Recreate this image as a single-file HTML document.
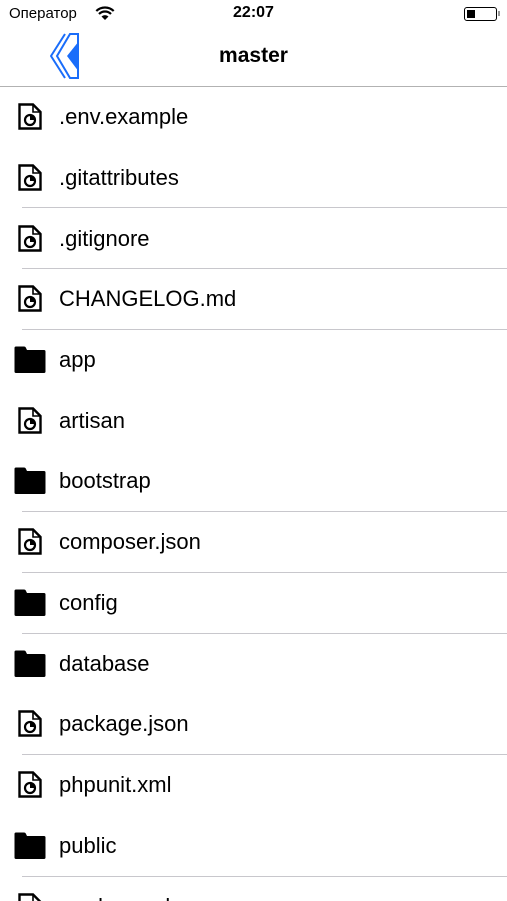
<!DOCTYPE html>
<html><head><meta charset="utf-8"><style>
*{margin:0;padding:0;box-sizing:border-box}
html,body{width:507px;height:901px;overflow:hidden}
body{background:#fff;font-family:"Liberation Sans",Arial,sans-serif;position:relative;color:#000}
.a{position:absolute}
.row{position:absolute;left:0;width:507px;height:61px}
.t{position:absolute;left:59px;top:18px;font-size:22px;line-height:25px}
.sep{position:absolute;left:22px;width:485px;height:1px;background:#c8c7cc}
.fi{position:absolute;left:18px;top:17px}
.di{position:absolute;left:13px;top:17px}
</style></head><body>
<div class="a" style="left:9px;top:5px;font-size:15px">Оператор</div>
<svg class="a" style="left:95px;top:6px" width="20" height="15" viewBox="0 0 20 15"><path d="M10 14 L6.5 10.5 A5 5 0 0 1 13.5 10.5 Z" fill="#000"/><path d="M4 8 A8.5 8.5 0 0 1 16 8" stroke="#000" stroke-width="2.2" fill="none"/><path d="M1.3 5 A12.5 12.5 0 0 1 18.7 5" stroke="#000" stroke-width="2.2" fill="none"/></svg>
<div class="a" style="left:0;width:507px;top:4px;text-align:center;font-size:16px;font-weight:bold">22:07</div>
<div class="a" style="left:464px;top:7px;width:33px;height:14px;border:1px solid #000;border-radius:3px"><div style="position:absolute;left:2px;top:2px;width:8px;height:8px;background:#000"></div></div>
<div class="a" style="left:498px;top:11px;width:2px;height:5px;background:#999"></div>
<svg class="a" style="left:48px;top:31px" width="34" height="50" viewBox="0 0 34 50"><path d="M17 3 L3 25 L17 47" stroke="#1a6dfa" stroke-width="2" fill="none" stroke-linejoin="round"/><path d="M30 3 L22 3 L9 25 L22 47 L30 47 Z" fill="none" stroke="#1a6dfa" stroke-width="2"/><path d="M31 10 L19 25 L31 41 Z" fill="#1a6dfa"/></svg>
<div class="a" style="left:0;width:507px;top:44px;text-align:center;font-size:21px;font-weight:bold">master</div>
<div class="a" style="left:0;width:507px;top:86px;height:1px;background:#b2b2b2"></div>

<svg width="0" height="0" style="position:absolute">
<defs>
<g id="file"><path d="M1.5 1.5 H15 L22.5 9 V25.5 H1.5 Z" fill="none" stroke="#000" stroke-width="2.4"/><path d="M15 1.5 V9 H22.5" fill="none" stroke="#000" stroke-width="1.6"/><circle cx="12" cy="17" r="5" fill="none" stroke="#000" stroke-width="2.2"/><path d="M12 17 V12 A5 5 0 0 1 17 17 Z" fill="#000"/></g>
<g id="dir"><path d="M1.5 2 Q1.5 0.5 3 0.5 H11 Q12.5 0.5 13 2 L14 4 H31 Q32.5 4 32.5 5.5 V25.5 Q32.5 27 31 27 H3 Q1.5 27 1.5 25.5 Z" fill="#000"/></g>
</defs></svg>

<div class="row" style="top:86px"><svg class="fi" width="24" height="27"><use href="#file"/></svg><div class="t">.env.example</div></div>
<div class="row" style="top:147px"><svg class="fi" width="24" height="27"><use href="#file"/></svg><div class="t">.gitattributes</div></div>
<div class="sep" style="top:207px"></div>
<div class="row" style="top:208px"><svg class="fi" width="24" height="27"><use href="#file"/></svg><div class="t">.gitignore</div></div>
<div class="sep" style="top:268px"></div>
<div class="row" style="top:268px"><svg class="fi" width="24" height="27"><use href="#file"/></svg><div class="t">CHANGELOG.md</div></div>
<div class="sep" style="top:329px"></div>
<div class="row" style="top:329px"><svg class="di" width="33" height="28"><use href="#dir"/></svg><div class="t">app</div></div>
<div class="row" style="top:390px"><svg class="fi" width="24" height="27"><use href="#file"/></svg><div class="t">artisan</div></div>
<div class="row" style="top:450px"><svg class="di" width="33" height="28"><use href="#dir"/></svg><div class="t">bootstrap</div></div>
<div class="sep" style="top:511px"></div>
<div class="row" style="top:511px"><svg class="fi" width="24" height="27"><use href="#file"/></svg><div class="t">composer.json</div></div>
<div class="sep" style="top:572px"></div>
<div class="row" style="top:572px"><svg class="di" width="33" height="28"><use href="#dir"/></svg><div class="t">config</div></div>
<div class="sep" style="top:633px"></div>
<div class="row" style="top:633px"><svg class="di" width="33" height="28"><use href="#dir"/></svg><div class="t">database</div></div>
<div class="row" style="top:693px"><svg class="fi" width="24" height="27"><use href="#file"/></svg><div class="t">package.json</div></div>
<div class="sep" style="top:754px"></div>
<div class="row" style="top:754px"><svg class="fi" width="24" height="27"><use href="#file"/></svg><div class="t">phpunit.xml</div></div>
<div class="row" style="top:815px"><svg class="di" width="33" height="28"><use href="#dir"/></svg><div class="t">public</div></div>
<div class="sep" style="top:876px"></div>
<div class="row" style="top:876px"><svg class="fi" width="24" height="27"><use href="#file"/></svg><div class="t">readme.md</div></div>
</body></html>
